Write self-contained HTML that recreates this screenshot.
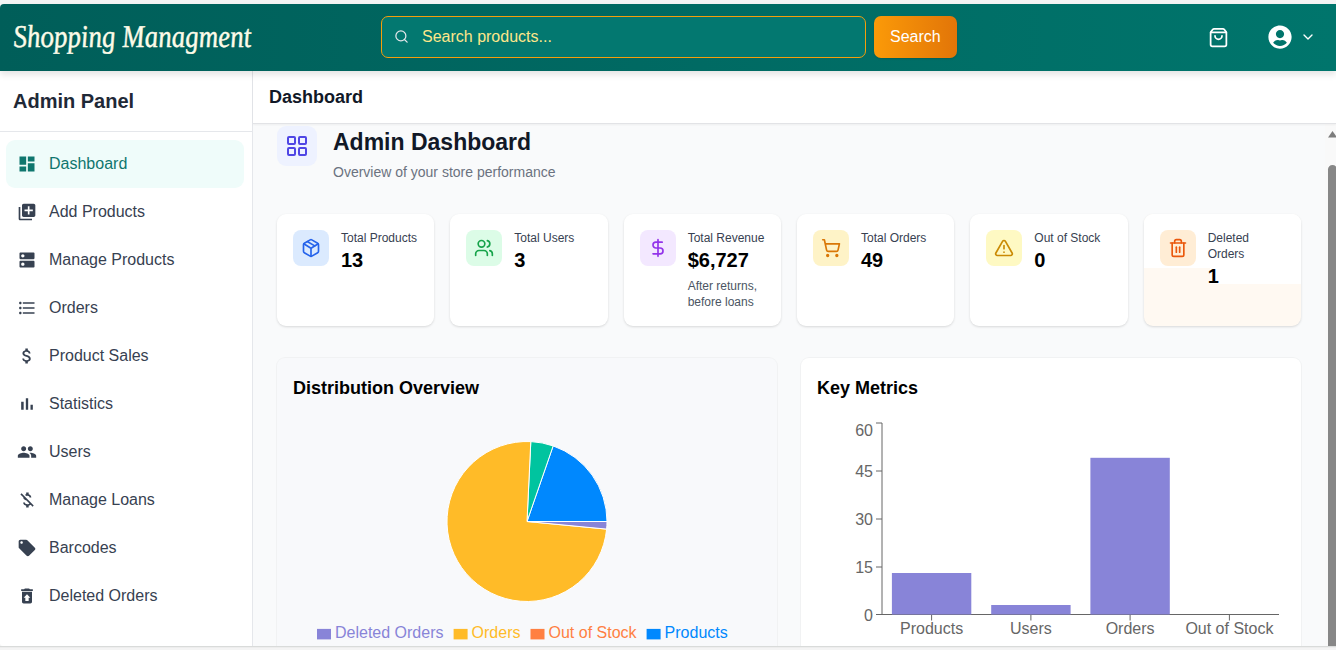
<!DOCTYPE html>
<html><head><meta charset="utf-8">
<style>
*{box-sizing:border-box;margin:0;padding:0}
html,body{width:1336px;height:650px;overflow:hidden;background:#f4f4f4;font-family:"Liberation Sans",sans-serif}
.a{position:absolute;line-height:1;white-space:nowrap}
svg{position:absolute;overflow:visible}
#hdr{position:absolute;left:0;top:4px;width:1336px;height:67px;background:linear-gradient(to right,#005e59,#00756c);border-top-left-radius:4px;box-shadow:0 4px 6px rgba(0,0,0,.10);z-index:5}
#logo{position:absolute;left:12px;top:17px;font-family:"Liberation Serif",serif;font-style:italic;font-weight:normal;font-size:27px;line-height:1;color:#fdfbe8;-webkit-text-stroke:0.4px #fdfbe8;transform:scaleY(1.18) skewX(5deg);transform-origin:0 0;white-space:nowrap}
#search{position:absolute;left:381px;top:12px;width:485px;height:42px;border:1px solid #f59e0b;border-radius:7px;background:#037870}
#btn{position:absolute;left:874px;top:12px;width:83px;height:42px;border-radius:7px;background:linear-gradient(to right,#fb9a08,#e27508);box-shadow:0 1px 2px rgba(0,0,0,.15)}
#side{position:absolute;left:0;top:71px;width:253px;height:575px;background:#fff;border-right:1px solid #e5e7eb;border-bottom-left-radius:3px}
.nav{position:absolute;left:6px;width:238px;height:48px;border-radius:9px}
.nav.act{background:#effcfa}
.nav .t{position:absolute;left:43px;top:16px;font-size:16px;line-height:1;color:#374151;white-space:nowrap}
.nav.act .t{color:#0f766e}
.nav svg{left:11px;top:14px}
#mainhdr{position:absolute;left:253px;top:71px;width:1083px;height:53px;background:#fff;border-bottom:1px solid #e2e3e6;box-shadow:0 1px 2px rgba(0,0,0,.05);z-index:2}
#content{position:absolute;left:253px;top:124px;width:1083px;height:522px;background:#f9fafb;overflow:hidden}
#track{position:absolute;left:1325px;top:123px;width:11px;height:523px;background:#f9f9f9}
.card{position:absolute;top:90px;width:157.33px;height:112px;background:#fff;border-radius:9px;box-shadow:0 1px 3px rgba(0,0,0,.09),0 1px 2px rgba(0,0,0,.05)}
.card .ic{position:absolute;left:16px;top:16px;width:36px;height:36px;border-radius:8px}
.card .ic svg{left:8px;top:8px}
.card .tx{position:absolute;left:64px;top:16px;width:77px}
.card .lb{font-size:12px;line-height:16px;color:#374151}
.card .v{font-size:20px;line-height:28px;font-weight:bold;color:#000}
.card .sub{font-size:12px;line-height:16px;color:#4b5563;margin-top:4px}
.chart{position:absolute;top:234px;width:500px;height:300px;border-radius:8px}
.chart h3{position:absolute;left:16px;top:21px;font-size:18px;line-height:1;font-weight:bold;color:#000;white-space:nowrap}
</style></head><body>
<div id="hdr">
  <div id="logo">Shopping Managment</div>
  <div id="search">
    <svg style="left:11.5px;top:11.5px" width="15" height="15" viewBox="0 0 24 24" fill="none" stroke="#e5e7eb" stroke-width="2" stroke-linecap="round"><circle cx="11" cy="11" r="8"/><path d="M21 21l-4.3-4.3"/></svg>
    <div class="a" style="left:40px;top:11.5px;font-size:16px;color:#fde68a">Search products...</div>
  </div>
  <div id="btn"><div class="a" style="left:16px;top:12.5px;font-size:16px;color:#fff">Search</div></div>
  <svg style="left:1207.5px;top:22.5px" width="21" height="21" viewBox="0 0 24 24" fill="none" stroke="#fff" stroke-width="2" stroke-linecap="round" stroke-linejoin="round"><path d="M16 10a4 4 0 0 1-8 0"/><path d="M3.103 6.034h17.794"/><path d="M3.4 5.467a2 2 0 0 0-.4 1.2V20a2 2 0 0 0 2 2h14a2 2 0 0 0 2-2V6.667a2 2 0 0 0-.4-1.2l-2-2.667A2 2 0 0 0 17 2H7a2 2 0 0 0-1.6.8z"/></svg>
  <svg style="left:1268px;top:21px" width="24" height="24" viewBox="0 0 496 512" fill="#fff"><path d="M248 8C111 8 0 119 0 256s111 248 248 248 248-111 248-248S385 8 248 8zm0 96c48.6 0 88 39.4 88 88s-39.4 88-88 88-88-39.4-88-88 39.4-88 88-88zm0 344c-58.7 0-111.3-26.6-146.5-68.2 18.8-35.4 55.6-59.8 98.5-59.8 2.4 0 4.8.4 7.1 1.1 13 4.2 26.6 6.9 40.9 6.9 14.3 0 28-2.7 40.9-6.9 2.3-.7 4.7-1.1 7.1-1.1 42.9 0 79.7 24.4 98.5 59.8C359.3 421.4 306.7 448 248 448z"/></svg>
  <svg style="left:1300px;top:25px" width="16" height="16" viewBox="0 0 24 24" fill="none" stroke="#fff" stroke-width="2" stroke-linecap="round" stroke-linejoin="round"><path d="m6 9 6 6 6-6"/></svg>
</div>

<div id="side">
  <div class="a" style="left:13px;top:20px;font-size:20px;font-weight:bold;color:#1f2937">Admin Panel</div>
  <div style="position:absolute;left:0;top:60px;width:252px;height:1px;background:#e5e7eb"></div>
  <div class="nav act" style="top:69px">
    <svg width="20" height="20" viewBox="0 0 24 24" fill="#0f766e"><path d="M3 13h8V3H3v10zm0 8h8v-6H3v6zm10 0h8V11h-8v10zm0-18v6h8V3h-8z"/></svg>
    <div class="t">Dashboard</div></div>
  <div class="nav" style="top:117px">
    <svg width="20" height="20" viewBox="0 0 24 24" fill="#374151"><path d="M4 6H2v14c0 1.1.9 2 2 2h14v-2H4V6zm16-4H8c-1.1 0-2 .9-2 2v12c0 1.1.9 2 2 2h12c1.1 0 2-.9 2-2V4c0-1.1-.9-2-2-2zm-1 9h-4v4h-2v-4H9V9h4V5h2v4h4v2z"/></svg>
    <div class="t">Add Products</div></div>
  <div class="nav" style="top:165px">
    <svg width="20" height="20" viewBox="0 0 24 24" fill="#374151"><path d="M20 13H4c-.55 0-1 .45-1 1v6c0 .55.45 1 1 1h16c.55 0 1-.45 1-1v-6c0-.55-.45-1-1-1zM7 19c-1.1 0-2-.9-2-2s.9-2 2-2 2 .9 2 2-.9 2-2 2zM20 3H4c-.55 0-1 .45-1 1v6c0 .55.45 1 1 1h16c.55 0 1-.45 1-1V4c0-.55-.45-1-1-1zM7 9c-1.1 0-2-.9-2-2s.9-2 2-2 2 .9 2 2-.9 2-2 2z"/></svg>
    <div class="t">Manage Products</div></div>
  <div class="nav" style="top:213px">
    <svg width="20" height="20" viewBox="0 0 24 24" fill="#374151"><path d="M4 10.5c-.83 0-1.5.67-1.5 1.5s.67 1.5 1.5 1.5 1.5-.67 1.5-1.5-.67-1.5-1.5-1.5zm0-6c-.83 0-1.5.67-1.5 1.5S3.17 7.5 4 7.5 5.5 6.83 5.5 6 4.83 4.5 4 4.5zm0 12c-.83 0-1.5.68-1.5 1.5s.68 1.5 1.5 1.5 1.5-.68 1.5-1.5-.67-1.5-1.5-1.5zM7 19h14v-2H7v2zm0-6h14v-2H7v2zm0-8v2h14V5H7z"/></svg>
    <div class="t">Orders</div></div>
  <div class="nav" style="top:261px">
    <svg width="20" height="20" viewBox="0 0 24 24" fill="#374151"><path d="M11.8 10.9c-2.27-.59-3-1.2-3-2.15 0-1.09 1.01-1.850 2.7-1.85 1.78 0 2.44.85 2.5 2.1h2.21c-.07-1.72-1.12-3.3-3.21-3.81V3h-3v2.16c-1.94.42-3.5 1.68-3.5 3.610 0 2.31 1.91 3.46 4.7 4.13 2.5.6 3 1.48 3 2.41 0 .69-.49 1.79-2.7 1.79-2.06 0-2.870-.92-2.98-2.1h-2.2c.12 2.19 1.76 3.42 3.68 3.830V21h3v-2.15c1.95-.37 3.5-1.5 3.5-3.55 0-2.84-2.43-3.81-4.7-4.4z"/></svg>
    <div class="t">Product Sales</div></div>
  <div class="nav" style="top:309px">
    <svg width="20" height="20" viewBox="0 0 24 24" fill="#374151"><path d="M5 9.2h3V19H5zM10.6 5h2.8v14h-2.8zm5.6 8H19v6h-2.8z"/></svg>
    <div class="t">Statistics</div></div>
  <div class="nav" style="top:357px">
    <svg width="20" height="20" viewBox="0 0 24 24" fill="#374151"><path d="M16 11c1.66 0 2.99-1.34 2.99-3S17.66 5 16 5c-1.66 0-3 1.34-3 3s1.34 3 3 3zm-8 0c1.66 0 2.99-1.34 2.99-3S9.66 5 8 5C6.34 5 5 6.34 5 8s1.34 3 3 3zm0 2c-2.33 0-7 1.17-7 3.5V19h14v-2.5c0-2.33-4.67-3.5-7-3.5zm8 0c-.29 0-.62.02-.97.05 1.16.84 1.970 1.97 1.97 3.45V19h6v-2.5c0-2.33-4.67-3.5-7-3.5z"/></svg>
    <div class="t">Users</div></div>
  <div class="nav" style="top:405px">
    <svg width="20" height="20" viewBox="0 0 24 24" fill="#374151"><path d="M12.5 6.9c1.78 0 2.44.85 2.5 2.1h2.21c-.07-1.72-1.12-3.3-3.21-3.81V3h-3v2.16c-.53.12-1.03.3-1.48.54l1.47 1.47c.41-.17.91-.27 1.51-.27zM5.47 3.92L4.06 5.33 7.5 8.77c0 2.08 1.56 3.21 3.910 3.91l3.51 3.51c-.34.48-1.05.91-2.42.91-2.06 0-2.87-.92-2.98-2.1h-2.2c.12 2.19 1.76 3.42 3.68 3.83V21h3v-2.15c.96-.18 1.82-.55 2.45-1.12l2.22 2.22 1.41-1.41L5.47 3.92z"/></svg>
    <div class="t">Manage Loans</div></div>
  <div class="nav" style="top:453px">
    <svg width="20" height="20" viewBox="0 0 24 24" fill="#374151"><path d="M21.41 11.58l-9-9C12.05 2.22 11.55 2 11 2H4c-1.1 0-2 .9-2 2v7c0 .55.22 1.05.59 1.42l9 9c.36.36.86.58 1.41.58.55 0 1.05-.22 1.41-.59l7-7c.37-.36.59-.86.59-1.41 0-.55-.23-1.06-.59-1.42zM5.5 7C4.67 7 4 6.33 4 5.5S4.67 4 5.5 4 7 4.67 7 5.5 6.33 7 5.5 7z"/></svg>
    <div class="t">Barcodes</div></div>
  <div class="nav" style="top:501px">
    <svg width="20" height="20" viewBox="0 0 24 24" fill="#374151"><path d="M19 4h-3.5l-1-1h-5l-1 1H5v2h14zM6 7v12c0 1.1.9 2 2 2h8c1.1 0 2-.9 2-2V7H6zm8 7v4h-4v-4H8l4-4 4 4h-2z"/></svg>
    <div class="t">Deleted Orders</div></div>
</div>

<div id="mainhdr"><div class="a" style="left:16px;top:17px;font-size:18px;font-weight:bold;color:#111827">Dashboard</div></div>

<div id="content">
  <div style="position:absolute;left:24px;top:2px;width:40px;height:40px;border-radius:9px;background:#eef2ff">
    <svg style="left:8px;top:8px" width="24" height="24" viewBox="0 0 24 24" fill="none" stroke="#4f46e5" stroke-width="2" stroke-linecap="round" stroke-linejoin="round"><rect width="7" height="7" x="3" y="3" rx="1"/><rect width="7" height="7" x="14" y="3" rx="1"/><rect width="7" height="7" x="14" y="14" rx="1"/><rect width="7" height="7" x="3" y="14" rx="1"/></svg>
  </div>
  <div class="a" style="left:80px;top:7px;font-size:23px;font-weight:bold;color:#111827">Admin Dashboard</div>
  <div class="a" style="left:80px;top:41px;font-size:14px;color:#6b7280">Overview of your store performance</div>

  <div class="card" style="left:24px">
    <div class="ic" style="background:#dbeafe"><svg width="20" height="20" viewBox="0 0 24 24" fill="none" stroke="#2563eb" stroke-width="2" stroke-linecap="round" stroke-linejoin="round"><path d="M11 21.73a2 2 0 0 0 2 0l7-4A2 2 0 0 0 21 16V8a2 2 0 0 0-1-1.73l-7-4a2 2 0 0 0-2 0l-7 4A2 2 0 0 0 3 8v8a2 2 0 0 0 1 1.73z"/><path d="M12 22V12"/><path d="m3.3 7 7.703 4.734a2 2 0 0 0 1.994 0L20.7 7"/><path d="m7.5 4.27 9 5.15"/></svg></div>
    <div class="tx"><div class="lb">Total Products</div><div class="v">13</div></div>
  </div>
  <div class="card" style="left:197.33px">
    <div class="ic" style="background:#dcfce7"><svg width="20" height="20" viewBox="0 0 24 24" fill="none" stroke="#16a34a" stroke-width="2" stroke-linecap="round" stroke-linejoin="round"><path d="M16 21v-2a4 4 0 0 0-4-4H6a4 4 0 0 0-4 4v2"/><circle cx="9" cy="7" r="4"/><path d="M22 21v-2a4 4 0 0 0-3-3.87"/><path d="M16 3.13a4 4 0 0 1 0 7.75"/></svg></div>
    <div class="tx"><div class="lb">Total Users</div><div class="v">3</div></div>
  </div>
  <div class="card" style="left:370.67px">
    <div class="ic" style="background:#f3e8ff"><svg width="20" height="20" viewBox="0 0 24 24" fill="none" stroke="#9333ea" stroke-width="2" stroke-linecap="round" stroke-linejoin="round"><line x1="12" x2="12" y1="2" y2="22"/><path d="M17 5H9.5a3.5 3.5 0 0 0 0 7h5a3.5 3.5 0 0 1 0 7H6"/></svg></div>
    <div class="tx"><div class="lb">Total Revenue</div><div class="v">$6,727</div><div class="sub">After returns,<br>before loans</div></div>
  </div>
  <div class="card" style="left:544px">
    <div class="ic" style="background:#fef3c7"><svg width="20" height="20" viewBox="0 0 24 24" fill="none" stroke="#d97706" stroke-width="2" stroke-linecap="round" stroke-linejoin="round"><circle cx="8" cy="21" r="1"/><circle cx="19" cy="21" r="1"/><path d="M2.05 2.05h2l2.66 12.42a2 2 0 0 0 2 1.58h9.78a2 2 0 0 0 1.95-1.57l1.65-7.43H5.12"/></svg></div>
    <div class="tx"><div class="lb">Total Orders</div><div class="v">49</div></div>
  </div>
  <div class="card" style="left:717.33px">
    <div class="ic" style="background:#fef9c3"><svg width="20" height="20" viewBox="0 0 24 24" fill="none" stroke="#ca8a04" stroke-width="2" stroke-linecap="round" stroke-linejoin="round"><path d="m21.73 18-8-14a2 2 0 0 0-3.48 0l-8 14A2 2 0 0 0 4 21h16a2 2 0 0 0 1.73-3"/><path d="M12 9v4"/><path d="M12 17h.01"/></svg></div>
    <div class="tx"><div class="lb">Out of Stock</div><div class="v">0</div></div>
  </div>
  <div class="card" style="left:890.67px;background:#fff9f2;overflow:hidden">
    <div style="position:absolute;left:0;top:0;width:158px;height:54px;background:#fff"></div>
    <div style="position:absolute;left:66px;top:0;width:94px;height:70px;background:#fff"></div>
    <div class="ic" style="background:#ffedd5"><svg width="20" height="20" viewBox="0 0 24 24" fill="none" stroke="#ea580c" stroke-width="2" stroke-linecap="round" stroke-linejoin="round"><path d="M3 6h18"/><path d="M19 6v14c0 1-1 2-2 2H7c-1 0-2-1-2-2V6"/><path d="M8 6V4c0-1 1-2 2-2h4c1 0 2 1 2 2v2"/><line x1="10" x2="10" y1="11" y2="17"/><line x1="14" x2="14" y1="11" y2="17"/></svg></div>
    <div class="tx"><div class="lb">Deleted Orders</div><div class="v">1</div></div>
  </div>
  <div class="chart" style="left:24px;background:#f8f9fb;box-shadow:0 0 0 1px rgba(0,0,0,.03)"><h3>Distribution Overview</h3></div>
  <div class="chart" style="left:548px;background:#fff;box-shadow:0 0 0 1px rgba(0,0,0,.03)"><h3>Key Metrics</h3></div>
  <svg style="left:-253px;top:-124px" width="1336" height="650" viewBox="0 0 1336 650" font-family="Liberation Sans" font-size="16">
    <path d="M527,521.5 L607.000,521.500 A80,80 0 0 0 553.165,445.900 Z" fill="#0088FE" stroke="#fff" stroke-width="1"/>
    <path d="M527,521.5 L553.165,445.900 A80,80 0 0 0 530.807,441.591 Z" fill="#00C49F" stroke="#fff" stroke-width="1"/>
    <path d="M527,521.5 L530.807,441.591 A80,80 0 1 0 606.638,529.104 Z" fill="#FFBB28" stroke="#fff" stroke-width="1"/>
    <path d="M527,521.5 L606.638,529.104 A80,80 0 0 0 607.000,521.500 Z" fill="#8884d8" stroke="#fff" stroke-width="1"/>
    <rect x="317" y="628.9" width="14" height="10.5" fill="#8884d8"/><text x="335" y="637.8" fill="#8884d8">Deleted Orders</text>
    <rect x="453.6" y="628.9" width="14" height="10.5" fill="#FFBB28"/><text x="471.6" y="637.8" fill="#FFBB28">Orders</text>
    <rect x="530.5" y="628.9" width="14" height="10.5" fill="#FF8042"/><text x="548.5" y="637.8" fill="#FF8042">Out of Stock</text>
    <rect x="646.6" y="628.9" width="14" height="10.5" fill="#0088FE"/><text x="664.6" y="637.8" fill="#0088FE">Products</text>
    <g stroke="#666" stroke-width="1" fill="none">
      <path d="M882,423 V614.5 H1279"/>
      <path d="M876,423 H882 M876,471 H882 M876,519 H882 M876,567 H882 M876,614.5 H882"/>
      <path d="M931.6,614.5 V620.5 M1030.9,614.5 V620.5 M1130.1,614.5 V620.5 M1229.4,614.5 V620.5"/>
    </g>
    <g fill="#8884d8">
      <rect x="891.9" y="573" width="79.4" height="41.5"/>
      <rect x="991.2" y="605" width="79.4" height="9.5"/>
      <rect x="1090.4" y="457.8" width="79.4" height="156.7"/>
    </g>
    <g fill="#666" text-anchor="end">
      <text x="873" y="435.8">60</text><text x="873" y="476.5">45</text><text x="873" y="524.5">30</text><text x="873" y="572.5">15</text><text x="873" y="620.5">0</text>
    </g>
    <g fill="#666" text-anchor="middle">
      <text x="931.6" y="633.7">Products</text><text x="1030.9" y="633.7">Users</text><text x="1130.1" y="633.7">Orders</text><text x="1229.4" y="633.7">Out of Stock</text>
    </g>
  </svg>
</div>
<div id="track"></div>
<svg style="left:1325px;top:123px;overflow:hidden" width="11" height="523" viewBox="0 0 11 523"><path d="M3,14.5 L7.5,8 L12,14.5 Z" fill="#7d7d7d"/><rect x="3" y="42" width="9" height="500" rx="4.5" fill="#878787"/></svg>
<div style="position:absolute;left:0;top:646px;width:1336px;height:1px;background:#d9dbda"></div><div style="position:absolute;left:0;top:647px;width:1336px;height:1px;background:#ededed"></div>
</body></html>
